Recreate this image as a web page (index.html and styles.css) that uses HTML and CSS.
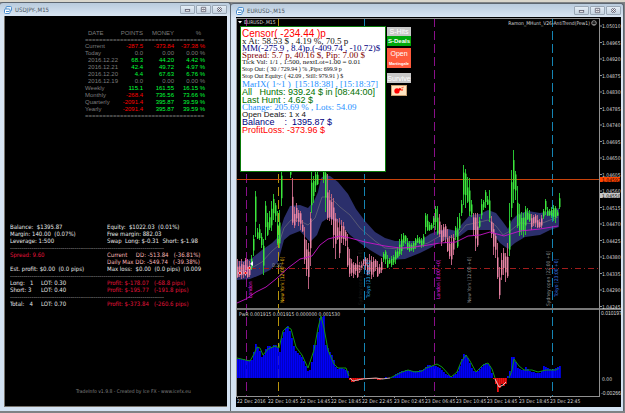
FILE: index.html
```html
<!DOCTYPE html>
<html lang="en">
<head>
<meta charset="utf-8">
<title>Trading terminal</title>
<link rel="stylesheet" href="styles.css">
</head>
<body>
<main class="desk">
  <section class="window">
    <header class="bar">
      <svg class="logo" viewBox="0 0 8 8"><rect x="2" y=".5" width="5.5" height="4.5" rx="1" fill="#e8f3fc" stroke="#4e8fce"/><rect x=".5" y="3" width="5.5" height="4.5" rx="1" fill="#fff" stroke="#4e8fce"/><path d="M2 5.500H5" stroke="#4e8fce"/></svg>
      <h1 class="title">USDJPY-,M15</h1>
      <button class="ctl" aria-label="Minimize"><svg viewBox="0 0 14 8"><rect x="4.500" y="4" width="5" height="2" fill="#fff" stroke="#667"/></svg></button>
      <button class="ctl" aria-label="Restore"><svg viewBox="0 0 14 8"><path d="M4.500 1.500h5v5h-5zM6 3.500h2v1H6z" fill="#fff" stroke="#667"/></svg></button>
      <button class="ctl" aria-label="Close"><svg viewBox="0 0 14 8"><path d="M5 2l4 4M9 2L5 6" stroke="#667" stroke-width="2.500"/><path d="M5 2l4 4M9 2L5 6" stroke="#fff"/></svg></button>
    </header>
    <div class="pane">
      <table class="stats">
        <colgroup><col class="c-date"><col class="c-points"><col class="c-money"><col class="c-pct"></colgroup>
        <thead>
          <tr><th class="date in">DATE</th><th>POINTS</th><th>MONEY</th><th class="pct">%</th></tr>
          <tr class="rule"><td colspan="4">==================================</td></tr>
        </thead>
        <tbody>
          <tr class="down"><th class="date">Current</th><td>-287.5</td><td>-373.84</td><td>-37.38 %</td></tr>
          <tr><th class="date">Today</th><td>0.0</td><td>0.00</td><td>0.00 %</td></tr>
          <tr class="up"><th class="date in">2016.12.22</th><td>68.3</td><td>44.20</td><td>4.42 %</td></tr>
          <tr class="up"><th class="date in">2016.12.21</th><td>42.4</td><td>49.72</td><td>4.97 %</td></tr>
          <tr class="up"><th class="date in">2016.12.20</th><td>4.4</td><td>67.63</td><td>6.76 %</td></tr>
          <tr><th class="date in">2016.12.19</th><td>0.0</td><td>0.00</td><td>0.00 %</td></tr>
          <tr class="up"><th class="date">Weekly</th><td>115.1</td><td>161.55</td><td>16.15 %</td></tr>
          <tr class="up"><th class="date">Monthly</th><td class="loss">-268.4</td><td>736.56</td><td>73.66 %</td></tr>
          <tr class="up"><th class="date">Quarterly</th><td class="loss">-2091.4</td><td>395.87</td><td>39.59 %</td></tr>
          <tr class="up"><th class="date">Yearly</th><td class="loss">-2091.4</td><td>395.87</td><td>39.59 %</td></tr>
          <tr class="rule"><td colspan="4">==================================</td></tr>
        </tbody>
      </table>
      <div class="account">
        <p class="line"><span>Balance:  $1395.87</span><span>Equity:  $1022.03  (0.01%)</span></p>
        <p class="line"><span>Margin: 140.00  (0.07%)</span><span>Free margin: 882.03</span></p>
        <p class="line"><span>Leverage: 1:500</span><span>Swap  Long: $-0.31  Short: $-1.98</span></p>
        <p class="dashes">-------------------------------------------------------------------------------</p>
        <p class="line"><span class="crimson">Spread: 9.60</span><span class="rose">Current     DD: -513.84   (-36.81%)</span></p>
        <p class="line"><span></span><span class="rose">Daily Max DD: -549.74   (-39.38%)</span></p>
        <p class="line"><span>Est. profit: $0.00  (0.0 pips)</span><span>Max loss:  $0.00  (0.0 pips)  (0.009</span></p>
        <p class="dashes">-------------------------------------------------------------------------------</p>
        <p class="line lots"><span>Long:   1</span><span>LOT: 0.30</span><span class="crimson">Profit: $-178.07   (-68.8 pips)</span></p>
        <p class="line lots"><span>Short: 3</span><span>LOT: 0.40</span><span class="crimson">Profit: $-195.77   (-191.8 pips)</span></p>
        <p class="dashes">-------------------------------------------------------------------------------</p>
        <p class="line lots"><span>Total:   4</span><span>LOT: 0.70</span><span class="crimson">Profit: $-373.84   (-260.6 pips)</span></p>
      </div>
      <footer class="credit">TradeInfo v1.9.8 - Created by Ice FX - www.icefx.eu</footer>
    </div>
  </section>

  <section class="window main">
    <header class="bar">
      <svg class="logo" viewBox="0 0 8 8"><rect x="2" y=".5" width="5.5" height="4.5" rx="1" fill="#e8f3fc" stroke="#4e8fce"/><rect x=".5" y="3" width="5.5" height="4.5" rx="1" fill="#fff" stroke="#4e8fce"/><path d="M2 5.500H5" stroke="#4e8fce"/></svg>
      <h1 class="title">EURUSD-,M15</h1>
      <button class="ctl" aria-label="Minimize"><svg viewBox="0 0 14 8"><rect x="4.500" y="4" width="5" height="2" fill="#fff" stroke="#667"/></svg></button>
      <button class="ctl" aria-label="Restore"><svg viewBox="0 0 14 8"><path d="M4.500 1.500h5v5h-5zM6 3.500h2v1H6z" fill="#fff" stroke="#667"/></svg></button>
      <button class="ctl" aria-label="Close"><svg viewBox="0 0 14 8"><path d="M5 2l4 4M9 2L5 6" stroke="#667" stroke-width="2.500"/><path d="M5 2l4 4M9 2L5 6" stroke="#fff"/></svg></button>
    </header>
    <div class="stage">
      <svg class="chart" id="chart" viewBox="236 17 385 390"></svg>
      <div class="overlay">
        <div class="report">
          <p class="big censor">Censor( -234.44 )p</p>
          <p class="serif">x At: 58.53 $ , 4.19 %, 70.5 p</p>
          <p class="serif navy">MM(-275.9 , 8.4)p.(-409.74 , -10.72)$</p>
          <p class="serif maroon">Spread: 5.7 p, 40.16 $, Pip: 7.00 $</p>
          <p class="serif mid">Tick Val: 1/1 , 1:500, nextLot=1.00 = 0.01</p>
          <p class="serif small">Stop Out: ( 30 / 729.94 ) % ,Pips: 699.9 p</p>
          <p class="serif small">Stop Out Equity: ( 42.09 , Still: 979.91 ) $</p>
          <p class="serif sky tall">MarIX( 1~1 )  [15:18:38] , [15:18:37]</p>
          <p class="big green">All   Hunts: 939.24 $ in [08:44:00]</p>
          <p class="big green">Last Hunt : 4.62 $</p>
          <p class="serif sky">Change: 205.69 % , Lots: 54.09</p>
          <p class="deals">Open Deals: 1 x 4</p>
          <p class="big navy">Balance    :  1395.87 $</p>
          <p class="big red">ProfitLoss: -373.96 $</p>
        </div>
        <div class="actions">
          <button class="act off">S-Hits</button>
          <button class="act go">S-Deals</button>
          <button class="act warn open">Open</button>
          <button class="act warn tiny">Martingale</button>
          <button class="act off survive">Survive</button>
          <button class="bomb" aria-label="Close all"><svg viewBox="0 0 16 11"><circle cx="5.500" cy="6" r="3.200" fill="#f00"/><path d="M7 4l2-2 2 2-2 2z" fill="#e00"/><path d="M10 3l1-1M11 4h2M12 2l1.500-.5M10.500 5l2 .5" stroke="#f20" stroke-width="1"/></svg></button>
        </div>
      </div>
    </div>
  </section>
</main>
<script src="chart.js"></script>
</body>
</html>
```
FILE: styles.css
```css
* { box-sizing: border-box; }

body {
  margin: 0;
  min-height: 100vh;
  background: linear-gradient(#d9d6cc 0 2px, #7f8285 2px);
  font-family: "DejaVu Sans Condensed", "DejaVu Sans", sans-serif;
  font-size: 6px;
}

p, h1 { margin: 0; font-size: inherit; font-weight: normal; }
button { font: inherit; margin: 0; padding: 0; border: 0; }

.desk {
  display: grid;
  grid-template-columns: minmax(0, 231fr) minmax(0, 393fr);
  padding: 2px 1px 2px 0;
}

.window {
  display: flex;
  flex-direction: column;
  padding: 0 3px 4px 4px;
  border: solid #5d6670;
  border-width: 1px 1px 0 0;
  border-radius: 3px 3px 0 0;
  background: linear-gradient(#b9cbdd, #dbe7f4 14px, #d3e2f2);
}

.main { margin-top: 1px; padding: 0 2px 4px 5px; }

.bar { display: flex; align-items: center; height: 13px; gap: 1px; }
.logo { width: 8px; height: 8px; }
.title { flex: 1; padding-left: 2px; color: #4b5560; line-height: 8px; }

.ctl {
  width: 15px;
  height: 9px;
  border: 1px solid #9aa8b6;
  border-radius: 1px;
  background: linear-gradient(#e4edf6, #c6d4e2);
}
.ctl svg { display: block; width: 100%; height: 7px; }

/* account window */
.pane {
  flex: 1;
  display: flex;
  flex-direction: column;
  padding: 14px 0 12px 5px;
  border: 1px solid #77736c;
  border-width: 0 0 1px 1px;
  background: #000;
  color: #e8e8e8;
  overflow: hidden;
}

.stats {
  width: 120px;
  margin-left: 75px;
  table-layout: fixed;
  border-collapse: collapse;
  font: 6px/7px "Liberation Sans", sans-serif;
  color: #7c7c7c;
}
.c-date { width: 34px; }
.c-points { width: 24px; }
.c-money, .c-pct { width: 31px; }
.stats th, .stats td { padding: 0; text-align: right; font-weight: normal; white-space: nowrap; }
.stats .date { text-align: left; color: #7c7c7c; }
.stats .in { padding-left: 3px; }
.stats .pct { padding-right: 4px; }
.stats .rule td { line-height: 6px; text-align: left; }
.up { color: #00ff3a; }
.down, .loss { color: #ff0000; }

.account { margin-top: 104px; line-height: 7px; }
.account p { white-space: pre; }
.line { display: grid; grid-template-columns: 97px 99px; }
.line span { overflow: hidden; }
.account .lots { grid-template-columns: 31px 66px 99px; }
.dashes { color: #a8a8a8; }
.crimson { color: #e4143c; }
.rose { color: #f8b8b8; }
.credit { margin-top: auto; padding-left: 66px; color: #808080; font-size: 5px; line-height: 6px; }

/* chart window */
.stage { position: relative; }
.chart { display: block; width: 100%; background: #000; font-size: 5px; }

.overlay { position: absolute; top: 9px; left: 4px; display: flex; gap: 1px; align-items: flex-start; }

.report {
  width: 146px;
  height: 146px;
  padding: 3px 0 0 1px;
  border: 1px solid #0a7a0a;
  background: #fff;
  color: #111;
}
.report p { white-space: pre; }
.big { font: 9px/8px "Liberation Sans", sans-serif; }
.censor { font-size: 10px; color: #f00; }
.deals { font: 8px/7px "Liberation Sans", sans-serif; }
.serif { font: 9px/7px "Liberation Serif", serif; }
.mid { font-size: 7px; }
.small { font-size: 6px; }
.tall { line-height: 8px; }
.navy { color: #000080; }
.maroon { color: #800000; }
.sky { color: #1e90ff; }
.green { color: #007000; }
.red { color: #f00; }

.actions { display: flex; flex-direction: column; align-items: center; width: 24px; padding-top: 1px; }
.act {
  width: 100%;
  height: 9px;
  color: #fff;
  font: 7px/9px "Liberation Sans", sans-serif;
}
.off { background: #c8c8c8; }
.go { height: 10px; background: #00a80c; font-size: 6px; font-weight: bold; }
.warn { height: 10px; background: #ff5a3c; }
.open { margin-top: 2px; }
.tiny { font-size: 4px; font-weight: bold; }
.survive { height: 10px; margin-top: 5px; }
.bomb { width: 16px; height: 11px; margin-top: 2px; border: 1px solid #c8a070; background: #ffe4c0; }
.bomb svg { display: block; width: 100%; height: 100%; }

.axis { fill: #d8d8d8; }
.narrow { font-family: "Liberation Sans Narrow", "Liberation Sans", sans-serif; }
```
FILE: chart.js
```js
const NS = "http://www.w3.org/2000/svg";
const chart = document.getElementById("chart");

function add(tag, attrs, text) {
  const el = document.createElementNS(NS, tag);
  for (const key in attrs) el.setAttribute(key, attrs[key]);
  if (text) el.textContent = text;
  chart.appendChild(el);
}

const line = (x1, y1, x2, y2, stroke, extra) => add("line", { x1, y1, x2, y2, stroke, ...extra });
const curve = (points, stroke, extra) => add("polyline", { points, stroke, fill: "none", ...extra });
const rect = (x, y, width, height, fill) => add("rect", { x, y, width, height, fill });

/* moving-average band */
const upper = "237,261 246,261 252,258 262,250 272,243 278,237 284,218 290,206 300,205 308,208 314,201 318,192 321,178 325,175 330,176 338,182 348,194 356,209 365,221 375,232 385,238 395,241 410,241 420,241 430,234 440,230 448,229 456,231 462,224 470,215 480,214 488,210 496,213 503,222 508,229 512,220 518,214 528,211 540,213 550,211 559,208";
const lower = "559,227 550,230 540,235 525,237 515,243 508,249 500,243 490,230 480,230 468,230 460,236 450,238 440,242 430,248 420,253 405,259 390,260 380,256 370,250 360,243 350,235 338,222 328,218 322,222 317,235 310,242 300,231 290,235 284,240 278,262 270,270 260,275 250,279 237,280";
add("polygon", { points: upper + " " + lower, fill: "#2b2f6b" });
curve("237,271 248,270 262,262 272,251 278,246 284,228 291,220 300,221 308,225 315,218 322,197 330,197 340,207 350,215 360,228 375,241 385,248 400,249 415,247 428,243 440,236 455,238 466,225 480,222 488,220 496,226 503,235 510,231 520,223 540,224 558,217", "#6c6c78", { "stroke-width": 0.7 });

/* session lines */
[[246.5, "#8a108a"], [278.5, "#b8940c"], [364.5, "#1585b4"], [434.5, "#8a108a"], [552.5, "#1585b4"]]
  .forEach(([x, c]) => line(x, 18, x, 396, c, { "stroke-dasharray": "9 4" }));

/* price levels */
line(237, 179.5, 599, 179.5, "#c8420a");
line(237, 268.5, 599, 268.5, "#a01c1c", { "stroke-dasharray": "6 3 1 3" });

/* candles, one every two pixels: high-low */
const runs = [
  [237, "p", "259-278 261-277 259-279 262-278 258-276 259-278 261-277"],
  [251, "g", "255-270 235-256 191-237 228-239 224-240 233-248 239-275 201-240 213-236 211-230 201-231 194-220 203-222 211-245 210-248 165-206"],
  [290, "g", "168-178"],
  [292, "p", "178-225 207-228 203-222 210-226 211-230 220-232 227-264 240-276 243-289 212-266"],
  [311, "g", "172-213 176-203 172-192 168-185"],
  [323, "g", "168-183 168-212"],
  [327, "p", "174-220 190-221 194-225 198-248 213-259 219-240 218-258 220-243 222-245 230-246 234-267 249-277 259-276 262-278 263-275 256-278 262-273 261-270 259-266 257-270 258-275 254-274 256-279 257-277 259-271 261-277 264-274 258-273"],
  [383, "g", "252-262 250-264 255-268 258-264 256-267 255-265 250-264 247-258 239-256 234-255 233-246 235-244 238-250 241-252 243-251 241-252 238-249 235-243 237-244 238-248 234-247 213-234 214-231 222-231 223-230 216-228 206-230 206-235"],
  [439, "p", "214-237 225-246 224-241 224-243 229-252 236-259 235-265 234-255"],
  [455, "g", "226-240 217-248 213-230 200-216 165-205 169-208 177-203 178-216 200-217"],
  [473, "p", "213-236 213-251 213-247"],
  [479, "g", "217-228 199-219 200-210 190-208 196-205 190-222"],
  [491, "p", "216-238 223-255 233-258 243-279 267-299 253-280 248-275 253-282 243-278"],
  [509, "g", "203-256 170-217 150-203 171-200 186-228 204-236 212-235 213-237 206-235 208-220 210-222"],
  [531, "p", "214-230 215-226 214-227 215-228 219-228 215-228"],
  [543, "g", "209-219 199-215 207-216 209-216 207-218 205-221 206-223 210-216 193-209"]
];
for (const [start, kind, list] of runs) {
  list.split(" ").forEach((pair, i) => {
    const [high, low] = pair.split("-").map(Number);
    const x = start + i * 2;
    const size = low - high;
    const top = high + size * (0.12 + ((x * 7) % 5) * 0.07);
    rect(x, high, 1, size, kind === "g" ? "#28c232" : "#b8607e");
    rect(x, top, 1.5, size * 0.55, kind === "g" ? "#3ce83c" : "#e884a4");
  });
}
curve("237,303 246,299 256,292 266,287 276,279 288,268 300,259 312,256 320,245 328,239 340,236 350,238 365,242 385,246 400,248 415,247 428,245 440,243 456,242 468,236 480,235 490,232 504,236 520,231 540,229 558,226", "#c814c8", { "stroke-width": 0.9 });

/* open-deal markers */
for (const [x, y] of [[240, 273], [245.5, 273], [249.5, 268]]) {
  add("path", { d: `M${x - 2} ${y}l2-2 2 2-2 2z`, fill: "#fff" });
  add("circle", { cx: x, cy: y, r: 1.2, fill: "#f01010" });
}
add("path", { d: "M250 264l3-3v5z", fill: "#fff" });
add("text", { x: 272, y: 267, fill: "#888", class: "narrow" }, "0.30");

/* session names */
[[252, 298, "London", "#e814e8"], [284, 303, "New York  [12:00 +0]", "#e0b410"],
 [362, 305, "Sydney open  [22:00 +0]", "#1c1816"], [370, 298, "Tokyo  [23:00 +0]", "#20a8e4"],
 [440, 299, "London  [8:00 +0]", "#e814e8"], [471, 303, "New York  [12:00 +0]", "#8a8a8a"],
 [550, 306, "Sydney open  [22:00 +0]", "#8a8a8a"], [558, 297, "Tokyo  [23:00 +0]", "#3470e0"]]
  .forEach(([x, y, label, fill]) => add("text", { transform: `translate(${x} ${y}) rotate(-90)`, fill }, label));

/* oscillator */
const osc = [[237,359],[252,360],[254,343],[258,348],[262,360],[264,350],[267,346],[272,347],[274,343],[279,352],[281,338],[284,329],[287,326],[290,334],[294,350],[302,358],[308,374],[311,362],[313,345],[316,345],[318,318],[323,316],[325,345],[332,357],[336,370],[340,367],[347,371],[348,379],[351,382],[356,381],[365,379],[373,379],[380,380],[384,377],[390,378],[396,373],[405,370],[415,371],[422,370],[427,365],[434,366],[438,367],[444,373],[451,377],[456,373],[460,364],[462,354],[466,355],[470,366],[474,373],[480,368],[484,362],[489,366],[492,377],[494,380],[497,392],[501,384],[504,387],[506,380],[508,372],[510,370],[511,357],[514,357],[516,367],[522,371],[525,367],[530,372],[540,373],[543,366],[550,370],[559,366]];
for (let x = 237; x <= 559; x += 2) {
  const i = Math.max(1, osc.findIndex(p => p[0] >= x));
  const [x0, y0] = osc[i - 1], [x1, y1] = osc[i];
  const y = Math.round(y0 + (y1 - y0) * (x - x0) / (x1 - x0));
  rect(x, Math.min(y, 378), 1.8, Math.abs(378 - y), y > 378 ? "#f01010" : "#0000f8");
}
curve("237,358 250,361 254,354 257,347 260,348 263,355 268,349 275,346 279,348 283,331 287,327 291,329 296,347 302,355 308,368 314,350 318,328 321,316 324,328 328,350 334,364 338,368 346,368 349,376", "#10960f");
curve("350,378 353,381 362,379 376,378 382,379 390,378", "#c8b4b4");
curve("390,378 402,372 408,370 415,372 422,371 426,368 432,366 437,364 442,367 451,377 457,372 461,362 466,355 470,361 476,372 483,365 488,363 492,369 495,378", "#10960f");
curve("495,379 499,387 503,385 506,382", "#e0c8c8");
curve("509,378 512,370 514,359 519,366 524,370 532,370 538,372 546,370 556,370 559,368", "#10960f");

/* frame and scales */
rect(236, 308, 385, 2, "#787878");
line(236, 18.5, 600, 18.5, "#909090");
line(236.5, 18, 236.5, 397, "#909090");
line(599.5, 18, 599.5, 397, "#909090");
line(236, 396.5, 600, 396.5, "#909090");

const scale = (y, label, fill = "#d8d8d8") => add("text", { x: 602, y: y + 2, fill }, label);
for (let i = 0; i < 18; i++) {
  const y = 26 + i * 16.5;
  line(600, y, 602, y, "#909090");
  scale(y, (1.0501 - i * 0.00045).toFixed(5));
}
rect(600, 177, 20, 5, "#ff4500");
scale(179.5, "1.04592", "#200");
rect(600, 193, 20, 5, "#c8c8c8");
scale(195.5, "1.04550", "#111");
add("text", { x: 601, y: 315, class: "axis narrow" }, "0.010197");
scale(378.5, "0.00");
add("text", { x: 601, y: 395, class: "axis narrow" }, "-0.002661");

["22 Dec 2016", "22 Dec 10:45", "22 Dec 14:45", "22 Dec 18:45", "22 Dec 22:45", "23 Dec 02:45",
 "23 Dec 06:45", "23 Dec 10:45", "23 Dec 14:45", "23 Dec 18:45", "23 Dec 22:45"].forEach((label, i) => {
  const x = Math.round(237 + i * 31.3);
  line(x + 0.5, 396, x + 0.5, 398, "#909090");
  add("text", { x, y: 403, class: "axis" }, label);
});

add("path", { d: "M238 21h4l-2 2.500z", fill: "#fff" });
add("text", { x: 244, y: 24, class: "axis" }, "EURUSD-,M15");
add("text", { x: 590, y: 25, class: "axis", "text-anchor": "end" }, "Ramon_MHunt_V26-AntiTrend(Pew1)");
add("circle", { cx: 594, cy: 23, r: 2.3, fill: "none", stroke: "#d0d0d0", "stroke-width": 0.7 });
add("path", { d: "M593 22v.8M595 22v.8M592.800 24q1.200 1 2.400 0", fill: "none", stroke: "#d0d0d0", "stroke-width": 0.6 });
add("text", { x: 239, y: 316, class: "axis" }, "PwR 0.001915 0.001915 0.000000 0.001530");
```
